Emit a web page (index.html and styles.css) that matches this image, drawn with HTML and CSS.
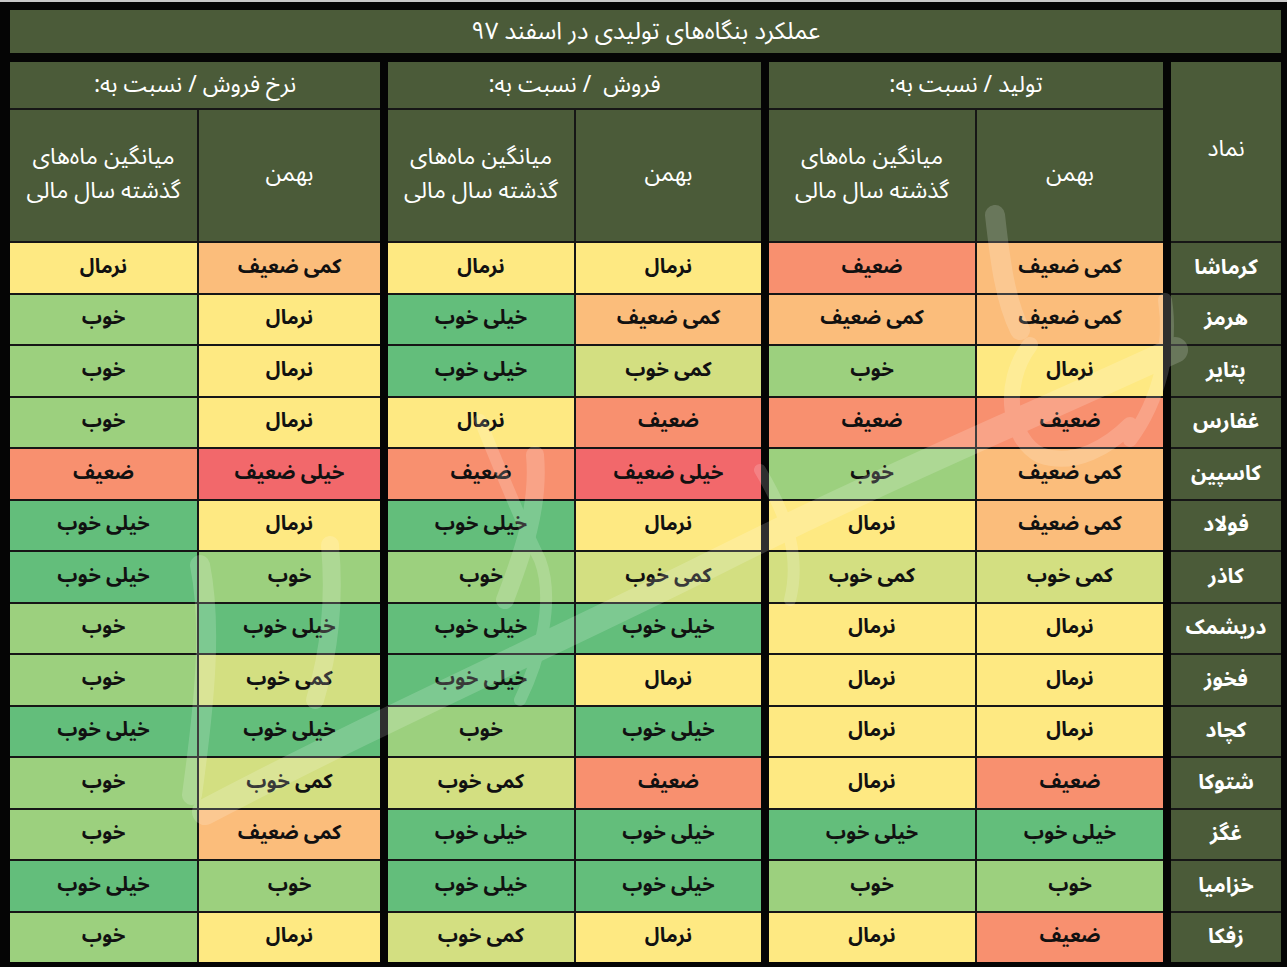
FILE: index.html
```html
<!DOCTYPE html>
<html lang="fa" dir="rtl">
<head>
<meta charset="utf-8">
<title>عملکرد بنگاه‌های تولیدی در اسفند ۹۷</title>
<link rel="stylesheet" href="styles.css">
</head>
<body>
<div class="page">
  <div class="title">عملکرد بنگاه‌های تولیدی در اسفند ۹۷</div>
  <div class="table">
    <div class="sym">
      <div class="sym-head">نماد</div>
      <div class="sym-cell">کرماشا</div>
      <div class="sym-cell">هرمز</div>
      <div class="sym-cell">پتایر</div>
      <div class="sym-cell">غفارس</div>
      <div class="sym-cell">کاسپین</div>
      <div class="sym-cell">فولاد</div>
      <div class="sym-cell">کاذر</div>
      <div class="sym-cell">دریشمک</div>
      <div class="sym-cell">فخوز</div>
      <div class="sym-cell">کچاد</div>
      <div class="sym-cell">شتوکا</div>
      <div class="sym-cell">غگز</div>
      <div class="sym-cell">خزامیا</div>
      <div class="sym-cell">زفکا</div>
    </div>

    <div class="group g-prod">
      <div class="ghead">تولید / نسبت به:</div>
      <div class="shead">بهمن</div>
      <div class="shead two">میانگین ماه‌های<br>گذشته سال مالی</div>
      <div class="c s3">کمی ضعیف</div><div class="c s2">ضعیف</div>
      <div class="c s3">کمی ضعیف</div><div class="c s3">کمی ضعیف</div>
      <div class="c s4">نرمال</div><div class="c s6">خوب</div>
      <div class="c s2">ضعیف</div><div class="c s2">ضعیف</div>
      <div class="c s3">کمی ضعیف</div><div class="c s6">خوب</div>
      <div class="c s3">کمی ضعیف</div><div class="c s4">نرمال</div>
      <div class="c s5">کمی خوب</div><div class="c s5">کمی خوب</div>
      <div class="c s4">نرمال</div><div class="c s4">نرمال</div>
      <div class="c s4">نرمال</div><div class="c s4">نرمال</div>
      <div class="c s4">نرمال</div><div class="c s4">نرمال</div>
      <div class="c s2">ضعیف</div><div class="c s4">نرمال</div>
      <div class="c s7">خیلی خوب</div><div class="c s7">خیلی خوب</div>
      <div class="c s6">خوب</div><div class="c s6">خوب</div>
      <div class="c s2">ضعیف</div><div class="c s4">نرمال</div>
    </div>

    <div class="group g-sale">
      <div class="ghead">فروش &nbsp;/ نسبت به:</div>
      <div class="shead">بهمن</div>
      <div class="shead two">میانگین ماه‌های<br>گذشته سال مالی</div>
      <div class="c s4">نرمال</div><div class="c s4">نرمال</div>
      <div class="c s3">کمی ضعیف</div><div class="c s7">خیلی خوب</div>
      <div class="c s5">کمی خوب</div><div class="c s7">خیلی خوب</div>
      <div class="c s2">ضعیف</div><div class="c s4">نرمال</div>
      <div class="c s1">خیلی ضعیف</div><div class="c s2">ضعیف</div>
      <div class="c s4">نرمال</div><div class="c s7">خیلی خوب</div>
      <div class="c s5">کمی خوب</div><div class="c s6">خوب</div>
      <div class="c s7">خیلی خوب</div><div class="c s7">خیلی خوب</div>
      <div class="c s4">نرمال</div><div class="c s7">خیلی خوب</div>
      <div class="c s7">خیلی خوب</div><div class="c s6">خوب</div>
      <div class="c s2">ضعیف</div><div class="c s5">کمی خوب</div>
      <div class="c s7">خیلی خوب</div><div class="c s7">خیلی خوب</div>
      <div class="c s7">خیلی خوب</div><div class="c s7">خیلی خوب</div>
      <div class="c s4">نرمال</div><div class="c s5">کمی خوب</div>
    </div>

    <div class="group g-rate">
      <div class="ghead">نرخ فروش / نسبت به:</div>
      <div class="shead">بهمن</div>
      <div class="shead two">میانگین ماه‌های<br>گذشته سال مالی</div>
      <div class="c s3">کمی ضعیف</div><div class="c s4">نرمال</div>
      <div class="c s4">نرمال</div><div class="c s6">خوب</div>
      <div class="c s4">نرمال</div><div class="c s6">خوب</div>
      <div class="c s4">نرمال</div><div class="c s6">خوب</div>
      <div class="c s1">خیلی ضعیف</div><div class="c s2">ضعیف</div>
      <div class="c s4">نرمال</div><div class="c s7">خیلی خوب</div>
      <div class="c s6">خوب</div><div class="c s7">خیلی خوب</div>
      <div class="c s7">خیلی خوب</div><div class="c s6">خوب</div>
      <div class="c s5">کمی خوب</div><div class="c s6">خوب</div>
      <div class="c s7">خیلی خوب</div><div class="c s7">خیلی خوب</div>
      <div class="c s5">کمی خوب</div><div class="c s6">خوب</div>
      <div class="c s3">کمی ضعیف</div><div class="c s6">خوب</div>
      <div class="c s6">خوب</div><div class="c s7">خیلی خوب</div>
      <div class="c s4">نرمال</div><div class="c s6">خوب</div>
    </div>
  </div>

  <svg class="watermark" width="1287" height="967" viewBox="0 0 1287 967" aria-hidden="true">
    <g fill="none" stroke="#ffffff" stroke-linecap="round" stroke-linejoin="round">
      <path d="M205 812 C 380 720 560 640 720 560 S 1000 430 1175 350" stroke-width="26"/>
      <path d="M995 215 C 1000 260 1005 300 1020 330" stroke-width="20"/>
      <path d="M1030 345 C 1000 385 1010 440 1040 455 C 1075 468 1110 445 1130 425" stroke-width="16"/>
      <path d="M1165 300 C 1172 345 1160 400 1130 440" stroke-width="14"/>
      <path d="M200 565 C 212 625 205 700 192 795" stroke-width="20"/>
      <path d="M330 545 C 335 600 330 650 315 700" stroke-width="18"/>
      <path d="M535 455 C 540 510 520 560 505 600" stroke-width="18"/>
      <path d="M480 420 C 500 470 520 520 540 560 C 555 600 540 660 520 700" stroke-width="12"/>
      <path d="M760 470 C 790 520 800 560 790 600" stroke-width="12"/>
    </g>
  </svg>
</div>
</body>
</html>
```

FILE: styles.css
```css
* { box-sizing: border-box; }

html, body {
  margin: 0;
  padding: 0;
  background: #050505;
}

body {
  width: 1287px;
  height: 967px;
  overflow: hidden;
  font-family: "Noto Sans Arabic", "Noto Naskh Arabic", "DejaVu Sans", sans-serif;
  border-top: 2px solid #c9c9c9;
}

.page {
  position: relative;
  width: 1287px;
  height: 965px;
  padding: 8px 6px 0 10px;
}

.title {
  height: 43px;
  background: #4b5b39;
  color: #ffffff;
  font-size: 24px;
  display: flex;
  align-items: center;
  justify-content: center;
}

.table {
  margin-top: 9px;
  display: flex;
  gap: 8px;
  height: 900px;
}

.sym {
  width: 110px;
  display: grid;
  grid-template-rows: 179px repeat(14, 1fr);
  row-gap: 2px;
  background: #161616;
}

.sym-head,
.sym-cell {
  background: #4b5b39;
  color: #ffffff;
  display: flex;
  align-items: center;
  justify-content: center;
}

.sym-head {
  font-size: 23px;
  padding-bottom: 6px;
}

.sym-cell {
  font-size: 21px;
  font-weight: bold;
  padding-bottom: 2px;
}

.group {
  display: grid;
  grid-template-rows: 46px 131px repeat(14, 1fr);
  gap: 2px;
  background: #161616;
}

.g-prod { grid-template-columns: 186px 206px; }
.g-sale { grid-template-columns: 185px 186px; }
.g-rate { grid-template-columns: 181px 187px; }

.ghead {
  grid-column: 1 / span 2;
  background: #4b5b39;
  color: #ffffff;
  font-size: 23px;
  display: flex;
  align-items: center;
  justify-content: center;
  padding-bottom: 2px;
}

.shead {
  background: #4b5b39;
  color: #ffffff;
  font-size: 23px;
  text-align: center;
  display: flex;
  align-items: center;
  justify-content: center;
  padding-bottom: 4px;
}

.shead.two {
  line-height: 34px;
}

.c {
  display: flex;
  align-items: center;
  justify-content: center;
  font-size: 20px;
  font-weight: bold;
  color: #111111;
  padding-bottom: 2px;
}

.s1 { background: #f2686b; }
.s2 { background: #f8906f; }
.s3 { background: #fbbd7b; }
.s4 { background: #fee982; }
.s5 { background: #d3df81; }
.s6 { background: #9cd07e; }
.s7 { background: #63be7b; }

.watermark {
  position: absolute;
  top: -2px;
  left: 0;
  pointer-events: none;
  opacity: 0.17;
}
```
